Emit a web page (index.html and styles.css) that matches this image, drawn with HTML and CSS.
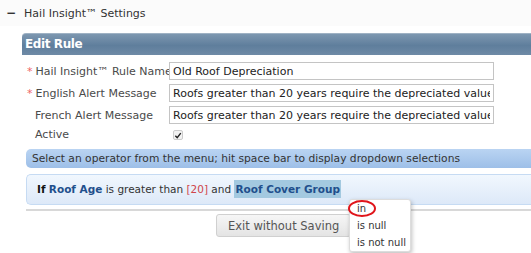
FILE: index.html
```html
<!DOCTYPE html>
<html lang="en">
<head>
    <meta charset="UTF-8">
    <title>Hail Insight Settings</title>
    <link rel="stylesheet" href="styles.css">
</head>
<body>
    <div class="section-title">
        <span class="toggle">&minus;</span>
        <span>Hail Insight&trade; Settings</span>
    </div>

    <div class="panel">
        <div class="panel-header">Edit Rule</div>

        <form class="rule-form">
            <label class="required">Hail Insight&trade; Rule Name</label>
            <input type="text" class="field" value="Old Roof Depreciation">

            <label class="required">English Alert Message</label>
            <input type="text" class="field" value="Roofs greater than 20 years require the depreciated value of the roof">

            <label>French Alert Message</label>
            <input type="text" class="field" value="Roofs greater than 20 years require the depreciated value of the roof">

            <label>Active</label>
            <span class="check"><svg width="9" height="9" viewBox="0 0 9 9"><path d="M1.5 4.8 L3.6 7 L7.6 1.8" fill="none" stroke="#222" stroke-width="1.6"/></svg></span>
        </form>

        <div class="hint-bar">Select an operator from the menu; hit space bar to display dropdown selections</div>

        <div class="condition">
            <b>If</b> <span class="field-name">Roof Age</span> is greater than <span class="value">[20]</span> and <span class="field-name selected">Roof Cover Group</span>
        </div>

        <div class="actions">
            <button type="button" class="btn">Exit without Saving</button>
        </div>

        <ul class="operator-menu">
            <li class="circled">in</li>
            <li>is null</li>
            <li>is not null</li>
        </ul>
    </div>
</body>
</html>
```

FILE: styles.css
```css
html, body {
    min-height: 253px;
}

body {
    margin: 0;
    font-family: "DejaVu Sans", Verdana, sans-serif;
    font-size: 11px;
    color: #333;
    background-color: #fff;
}

.section-title {
    display: flex;
    align-items: center;
    gap: 8px;
    height: 26px;
    padding-left: 6px;
    background-color: #fbfbfb;
    color: #333;
}

.toggle {
    font-weight: bold;
    font-size: 12px;
}

.panel {
    position: relative;
    margin: 7px 0 0 22px;
    padding-bottom: 20px;
}

.panel-header {
    height: 21px;
    line-height: 21px;
    padding-left: 3px;
    color: #fff;
    font-weight: bold;
    font-size: 12px;
    letter-spacing: -0.4px;
    border-radius: 4px 0 0 0;
    border-top: 1px solid #9fb2c4;
    background: linear-gradient(#7d97b0, #5f7e9c 55%, #6e8aa6);
}

.rule-form {
    display: grid;
    grid-template-columns: 142px 325px;
    row-gap: 4px;
    align-items: center;
    margin: 7px 0 0 5px;
}

.rule-form label {
    color: #4a4a4a;
    padding-left: 8px;
    white-space: nowrap;
}

.rule-form label.required {
    padding-left: 0;
}

.rule-form label.required::before {
    content: "*";
    color: #e66;
    margin-right: 3px;
}

.field {
    box-sizing: border-box;
    width: 325px;
    height: 18px;
    margin: 0;
    padding: 0 3px;
    border: 1px solid #c4c4c4;
    font-family: inherit;
    font-size: 11px;
    color: #222;
}

.check {
    display: flex;
    align-items: center;
    justify-content: center;
    width: 8px;
    height: 8px;
    margin: 1px 0 0 4px;
    border: 1px solid #ccc;
    border-radius: 2px;
    background: #f2f2f2;
}

.hint-bar {
    margin: 8px 0 0 4px;
    height: 19px;
    line-height: 19px;
    padding-left: 6px;
    font-size: 10.7px;
    color: #333;
    border-radius: 5px 0 0 5px;
    background: linear-gradient(#bad4f2, #9dbfe8);
}

.condition {
    margin: 6px 0 0 4px;
    height: 29px;
    line-height: 29px;
    padding-left: 10px;
    color: #333;
    border: 1px solid #c6dbf3;
    border-right: none;
    border-radius: 5px 0 0 5px;
    background: linear-gradient(#f1f7fe, #dde9f8);
    font-size: 10.5px;
}

.condition b {
    color: #111;
}

.field-name {
    color: #1f4f8c;
    font-weight: bold;
}

.field-name.selected {
    background-color: #a3c9e0;
    padding: 3px 1px;
}

.value {
    color: #d0454a;
}

.actions {
    display: flex;
    margin: 4px 0 0 4px;
    padding: 3px 0 0 190px;
    border-top: 2px solid #d8d8d8;
}

.btn {
    height: 23px;
    padding: 0 11px;
    font-family: inherit;
    font-size: 11.5px;
    color: #555;
    border: 1px solid #d0d0d0;
    border-radius: 3px;
    background: linear-gradient(#f6f6f6, #e4e4e4);
}

.operator-menu {
    position: absolute;
    left: 327px;
    top: 166px;
    width: 53px;
    margin: 0;
    padding: 0 0 0 7px;
    list-style: none;
    background: #fff;
    border: 1px solid #ddd;
    border-radius: 3px;
    box-shadow: 1px 2px 4px rgba(0, 0, 0, 0.25);
    font-size: 10px;
    color: #333;
}

.operator-menu li {
    line-height: 17px;
    white-space: nowrap;
}

.operator-menu li.circled {
    position: relative;
}

.operator-menu li.circled::after {
    content: "";
    position: absolute;
    left: -9px;
    top: 0;
    width: 24px;
    height: 13px;
    border: 2px solid #e0151b;
    border-radius: 50%;
}
```
